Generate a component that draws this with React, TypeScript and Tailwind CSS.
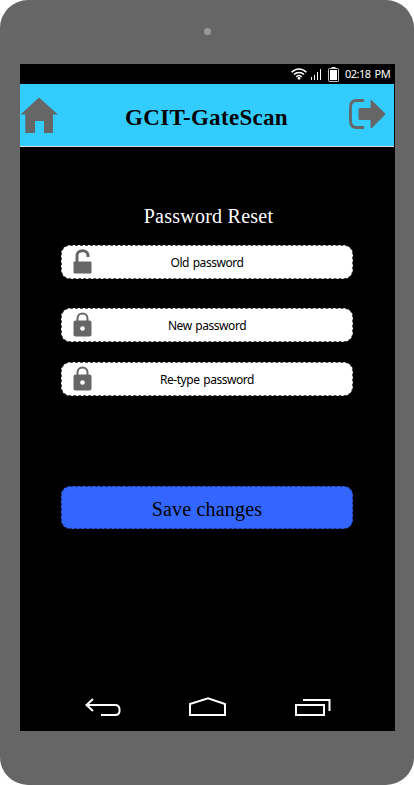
import React from "react";

function WifiIcon() {
  return (
    <svg width="16" height="12" viewBox="0 0 16 12" fill="none" stroke="#fff" strokeWidth="1.5">
      <path d="M.6 4.2C4.8-.2 11.2-.2 15.4 4.2" />
      <path d="M3 6.6c2.8-2.9 7.2-2.9 10 0" />
      <path d="M5.3 8.9c1.6-1.6 3.8-1.6 5.4 0" />
      <circle cx="8" cy="10.3" r="1.4" fill="#fff" stroke="none" />
    </svg>
  );
}

function SignalIcon() {
  return (
    <svg width="11" height="12" viewBox="0 0 11 12" fill="#fff" shapeRendering="crispEdges">
      <path d="M0 9h1v3H0zM3 7h1v5H3zM6 4h1v8H6zM9 1h1v11H9z" />
    </svg>
  );
}

function BatteryIcon() {
  return (
    <svg width="11" height="15" viewBox="0 0 11 15">
      <path d="M3.5 0h4v2h-4z" fill="#fff" />
      <rect x=".5" y="1.5" width="10" height="13" rx="1" fill="none" stroke="#ccc" />
      <rect x="2" y="3" width="7" height="10" fill="#fff" />
    </svg>
  );
}

function HomeIcon() {
  return (
    <svg className="mt-[13px]" width="38" height="36" viewBox="0 0 38 36" fill="#666">
      <path d="M19 .5 38 17.500H33V36H24V24H15V36H5.300V17.500H.5z" />
    </svg>
  );
}

function LogoutIcon() {
  return (
    <svg className="mt-[15px]" width="37" height="30" viewBox="0 0 37 30" fill="#666">
      <path d="M14 1.500H7.500Q1.500 1.500 1.500 8V22Q1.500 28.500 7.500 28.500H14" fill="none" stroke="#666" strokeWidth="2.8" strokeLinecap="round" />
      <path d="M11 9H21.500V2Q21.500 .3 23 1.500L36 14.200Q36.800 15 36 15.800L23 29Q21.500 30 21.500 28.500V21H11Q9.500 21 9.500 19.500V10.500Q9.500 9 11 9z" />
    </svg>
  );
}

function LockIcon({ open = false }: { open?: boolean }) {
  return open ? (
    <svg width="19" height="25" viewBox="0 0 19 25" fill="#666">
      <path d="M4 13V6.500C4 0 15 0 15 6.500V8" fill="none" stroke="#666" strokeWidth="3" />
      <rect x=".5" y="12.500" width="18" height="12" rx="1" />
    </svg>
  ) : (
    <svg width="19" height="25" viewBox="0 0 19 25">
      <path d="M4.500 9V6.500C4.500-.2 14.500-.2 14.500 6.500V9" fill="none" stroke="#666" strokeWidth="2" />
      <rect x=".5" y="8.500" width="18" height="16" rx="2" fill="#666" />
      <circle cx="9.500" cy="16.500" r="2.300" fill="#fff" />
    </svg>
  );
}

function Field({ label, open = false }: { label: string; open?: boolean }) {
  return (
    <div className="grid h-[34px] w-[292px] grid-cols-[31px_1fr_31px] items-start rounded-[9px] border border-dashed border-[#555] bg-white">
      <span className="pt-[3px] pl-[11px]">
        <LockIcon open={open} />
      </span>
      <span className="pt-[9px] text-center font-['Noto_Sans',sans-serif] text-[12px] leading-4 tracking-[-0.45px] [word-spacing:1px] whitespace-nowrap text-black">
        {label}
      </span>
    </div>
  );
}

export default function App() {
  return (
    <div className="h-[785px] w-[414px] rounded-[28px] bg-[#666] pl-5">
      <div className="flex h-16 w-[374px] justify-center pt-7">
        <div className="h-[7px] w-[7px] rounded-full bg-[#999]" />
      </div>
      <main className="flex h-[667px] w-[375px] flex-col bg-black">
        <div className="flex h-5 shrink-0 items-center pl-[271px]">
          <WifiIcon />
          <span className="ml-1"><SignalIcon /></span>
          <span className="ml-1.5"><BatteryIcon /></span>
          <span className="ml-1.5 font-['Noto_Sans',sans-serif] text-[11px] leading-5 tracking-[-0.5px] [word-spacing:1.5px] whitespace-nowrap text-white">02:18 PM</span>
        </div>
        <header className="flex h-[63px] w-[374px] shrink-0 justify-between border-b border-[#ddd] bg-[#33ccff] pr-2">
          <HomeIcon />
          <h1 className="mt-[18px] ml-[6px] font-['Liberation_Serif',serif] text-[23px] leading-8 font-bold tracking-[0.3px] whitespace-nowrap text-black">GCIT-GateScan</h1>
          <LogoutIcon />
        </header>
        <section className="flex w-[374px] flex-col items-center">
          <h2 className="mt-[56px] h-[42px] pl-[3px] font-['Liberation_Serif',serif] text-[20px] leading-[26px] tracking-[0.25px] text-white">Password Reset</h2>
          <Field label="Old password" open />
          <div className="mt-[29px]"><Field label="New password" /></div>
          <div className="mt-5"><Field label="Re-type password" /></div>
          <button className="mt-[90px] h-[43px] w-[292px] rounded-[9px] border border-dashed border-[#1a3380] bg-[#3366ff] pt-0.5 font-['Liberation_Serif',serif] text-[20px] leading-6 tracking-[0.2px] text-black">Save changes</button>
        </section>
        <nav className="mt-auto flex h-[34px] items-start pl-[65px]">
          <svg width="36" height="20" viewBox="0 0 36 20" fill="none" stroke="#fff" strokeWidth="2">
            <path d="M8 2 1.500 8 8 14M2 8H30Q34.500 8 34.500 12.500V14Q34.500 18 30 18H16" />
          </svg>
          <svg className="ml-[67px]" width="40" height="20" viewBox="0 0 40 20" fill="none" stroke="#fff" strokeWidth="2">
            <path d="M2 18V7L20 1.300 37 7V18z" />
          </svg>
          <svg className="ml-[67px]" width="37" height="20" viewBox="0 0 37 20" fill="none" stroke="#fff" strokeWidth="2">
            <path d="M1 8H29V18H1zM8 3H34.500V14" />
          </svg>
        </nav>
      </main>
    </div>
  );
}
